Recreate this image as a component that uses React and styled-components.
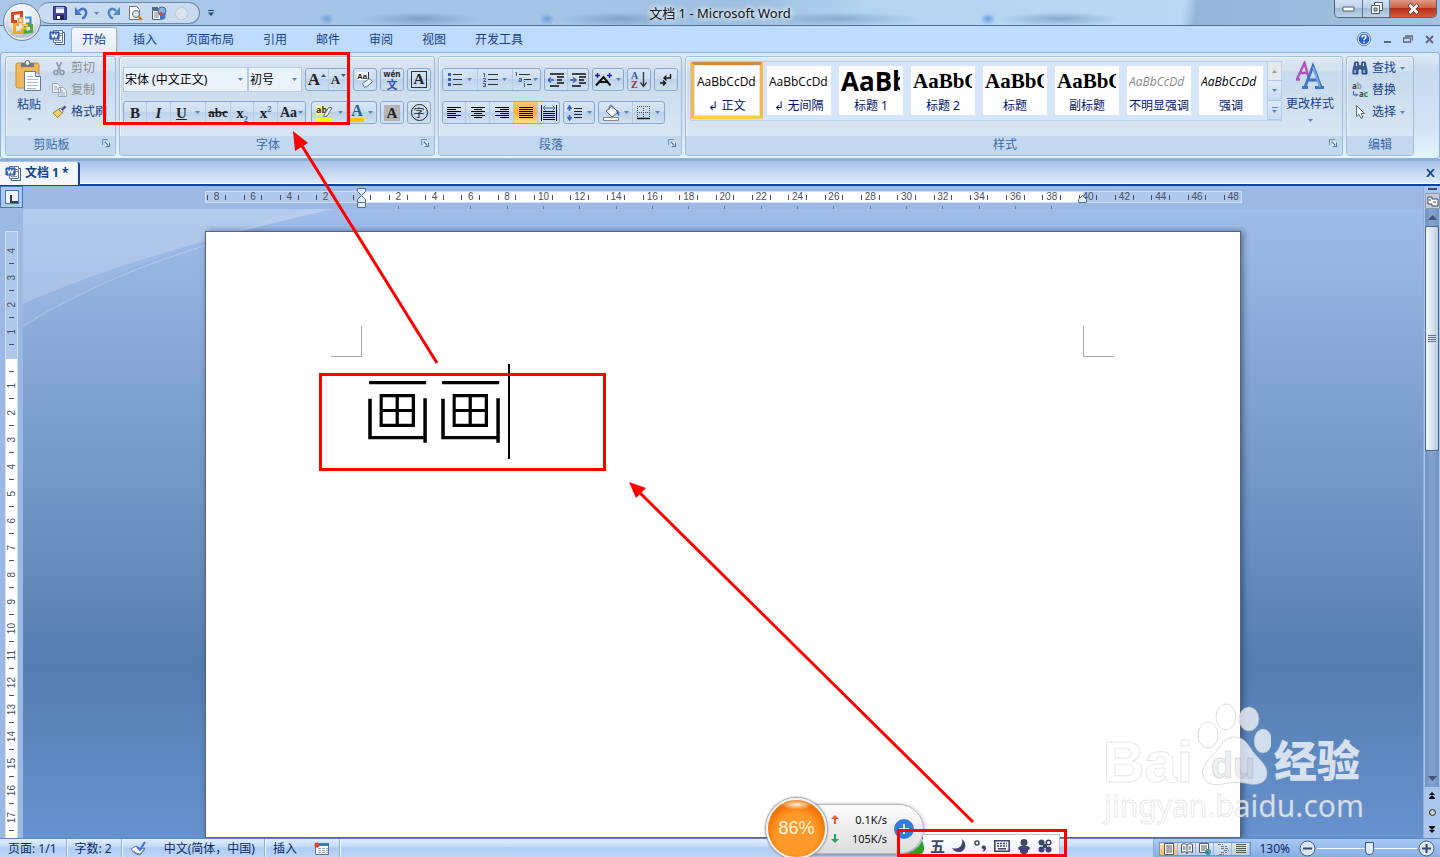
import React from 'react'
import styled, { createGlobalStyle } from 'styled-components'

const GlobalStyle = createGlobalStyle`
   *{
      box-sizing: border-box;
   }
   body{
      margin: 0;
      overflow: hidden;
      font-family: "Noto Sans", "Noto Sans CJK SC", sans-serif;
      font-size: 12px;
      line-height: 16px;
      color: #15428b;
   }
   button, select{
      font: inherit;
      color: inherit;
      padding: 0;
      margin: 0;
      border: 0;
      background: none;
   }
   a{
      color: inherit;
      text-decoration: none;
   }
   svg{
      display: block;
      flex: none;
   }
   p, h1, h2{
      margin: 0;
      font-size: inherit;
      font-weight: normal;
   }
`

/* ---------- icons ---------- */

const Drop = ({ color = '#5b83b8' }) => (
   <svg width="5" height="3" viewBox="0 0 5 3"><path d="M0 0h5L2.5 3z" fill={color} /></svg>
)

const Launcher = () => (
   <svg width="8" height="8" viewBox="0 0 8 8" fill="none">
      <path d="M.5 6V.5H6" stroke="#6d8fba" />
      <path d="M3 3h5v5H3z" fill="#fff" />
      <path d="M3 3l3 3M7.500 3.500v4h-4" stroke="#4d719f" strokeWidth="1.300" />
   </svg>
)

const WordIcon = () => (
   <svg width="17" height="17" viewBox="0 0 17 17">
      <path d="M6.500 3.500h9v12h-9z" fill="#fff" stroke="#44618f" />
      <path d="M4.500 1.500h9v12h-9z" fill="#f4f8ff" stroke="#5d7bab" />
      <path d="M10 4.500h3M10 6.500h3M6 11.500h6" stroke="#7d97c2" />
      <path d="M1 3h9v7H1z" fill="#3f68b8" stroke="#2b4f9b" />
      <path d="M2.500 4.500L4 8.500l1.500-3.500L7 8.500l1.500-4" fill="none" stroke="#fff" strokeWidth="1.200" />
   </svg>
)

const OfficeLogo = () => (
   <svg width="44" height="44" viewBox="0 0 44 44">
      <defs>
         <radialGradient id="orb" cx=".5" cy=".3" r=".75">
            <stop offset="0" stopColor="#fff" />
            <stop offset=".55" stopColor="#dfe6ef" />
            <stop offset=".8" stopColor="#b4c2d6" />
            <stop offset="1" stopColor="#f4f8fc" />
         </radialGradient>
      </defs>
      <circle cx="22" cy="22" r="18.500" fill="url(#orb)" stroke="#7285a0" />
      <circle cx="22" cy="22" r="17" fill="none" stroke="#fff" strokeOpacity=".8" />
      <g fill="none" strokeWidth="3">
         <path d="M17 21.500h-4.500v-8l9-1v5" stroke="#d9481c" />
         <path d="M25 17.500h5.500v6H26" stroke="#3f8fd0" strokeWidth="2.200" />
         <path d="M19 24.500h-4.500v8H22v-4" stroke="#f0a91e" />
         <path d="M25 26v6.500l6.500-1V25.500h-4" stroke="#5aa53a" />
         <path d="M18.500 18.500h4v4h-4z" stroke="#f39a2c" strokeWidth="1.600" />
         <path d="M22.500 24.500h4v4h-4z" stroke="#f4c52e" strokeWidth="1.600" />
      </g>
   </svg>
)

const Save = () => (
   <svg width="14" height="14" viewBox="0 0 14 14">
      <path d="M.5.500h12l1 1v12H.5z" fill="#4645a8" stroke="#2c2c80" />
      <path d="M3 1h8v6H3z" fill="#f4f6ff" /><path d="M3 1h8v2H3z" fill="#9fb3e6" />
      <path d="M3 9h8v5H3z" fill="#23235f" /><path d="M4 10h3v3H4z" fill="#fff" />
   </svg>
)
const Undo = ({ flip }) => (
   <svg width="13" height="14" viewBox="0 0 13 14">
      <g transform={flip ? 'translate(13 0) scale(-1 1)' : undefined}>
         <path d="M4 5c3-4 8-2 7 3-.4 2-1.500 3.500-4 4.500" fill="none" stroke={flip ? '#4d86c9' : '#4472c4'} strokeWidth="2.400" />
         <path d="M0 1v8h7z" fill={flip ? '#4d86c9' : '#4472c4'} />
      </g>
   </svg>
)
const Preview = () => (
   <svg width="15" height="15" viewBox="0 0 15 15">
      <path d="M1.500.500h7l3 3v10h-10z" fill="#fff" stroke="#6f7785" />
      <circle cx="8" cy="8" r="3.500" fill="#d5e6f6" stroke="#626b78" />
      <path d="M10.500 10.500l3.500 3.500" stroke="#c9842a" strokeWidth="2.400" />
   </svg>
)
const Research = () => (
   <svg width="16" height="15" viewBox="0 0 16 15">
      <path d="M1.500 4.500h8v9h-8z" fill="#fff" stroke="#53617a" />
      <path d="M3 7h5M3 9h5M3 11h5" stroke="#6f7f99" />
      <path d="M1 1h6v3H1z" fill="#5c6778" />
      <circle cx="11" cy="5" r="4" fill="#86b3e4" stroke="#41699e" />
      <path d="M9 9l6-3-1 7-4 1z" fill="#3c7ad0" /><circle cx="10" cy="8" r="2" fill="#d94d3c" />
   </svg>
)

const Paste = () => (
   <svg width="28" height="32" viewBox="0 0 28 32">
      <rect x="1" y="3" width="23" height="25" rx="2" fill="#efb65b" stroke="#c98f38" />
      <path d="M6 3h13v4H6z" fill="#737984" /><circle cx="12.500" cy="3" r="2.500" fill="#e7e9ec" stroke="#646a75" />
      <path d="M9.500 11.500h11l5 5v14h-16z" fill="#fbfdff" stroke="#63779a" />
      <path d="M20.500 11.500v5h5" fill="#d5e1f2" stroke="#63779a" />
      <path d="M12 16.500h6M12 19.500h11M12 22.500h11M12 25.500h11M12 28.500h9" stroke="#a9b9d3" />
   </svg>
)
const Cut = () => (
   <svg width="15" height="15" viewBox="0 0 15 15" fill="none" stroke="#8f9bad">
      <path d="M4.500 1l4 9M9.500 1l-4 9" strokeWidth="1.700" />
      <circle cx="4" cy="11.500" r="2" strokeWidth="1.700" /><circle cx="10" cy="11.500" r="2" strokeWidth="1.700" />
   </svg>
)
const Copy = () => (
   <svg width="15" height="14" viewBox="0 0 15 14" fill="#eef2f8" stroke="#97a5bb">
      <path d="M.5.500h5l3 3v6h-8zM6.500 4.500h5l3 3v6h-8z" /><path d="M2 4h3M2 6h4M8 8h3M8 10h5M8 12h5" />
   </svg>
)
const Brush = () => (
   <svg width="15" height="14" viewBox="0 0 16 14">
      <path d="M1 8l6-4 4 4-5 5z" fill="#f1d268" stroke="#9b7a24" />
      <path d="M7 4l2-1 3 3-1 2z" fill="#f6f6f6" stroke="#6e6e6e" />
      <path d="M10.500 4.500L14.500 1" stroke="#5a4a8a" strokeWidth="2.600" />
   </svg>
)

const SizeMark = ({ down }) => (
   <svg width="5" height="12" viewBox="0 0 5 12"><path d={down ? 'M0 0h5L2.500 3z' : 'M0 3h5L2.500 0z'} fill="#2f5597" /></svg>
)
const Eraser = () => (
   <svg width="18" height="18" viewBox="0 0 18 18">
      <path d="M1 1h12v8H1z" fill="#fff" />
      <text x="1" y="8" fontSize="8" fontWeight="bold" fontFamily="Liberation Sans" fill="#222">Aa</text>
      <path d="M12.500 1v7" stroke="#333" />
      <path d="M6.500 12.500l7-5 3 3-6 5.500H8z" fill="#eef1f8" stroke="#6a7896" />
   </svg>
)
const Highlighter = () => (
   <svg width="18" height="18" viewBox="0 0 18 18">
      <path d="M0 2h10v9H0z" fill="#fff68a" />
      <text x="0" y="9" fontSize="9" fontFamily="Noto Sans" fontWeight="bold" fill="#333">ab</text>
      <path d="M8 11l5-8 3 1-5 8-3 1z" fill="#e9eef7" stroke="#6a7690" />
      <path d="M0 14h16v4H0z" fill="#ff0" />
   </svg>
)

const Bullets = () => (
   <svg width="15" height="15" viewBox="0 0 15 15">
      <path d="M5 2.500h9M5 7.500h9M5 12.500h9" stroke="#333" />
      <path d="M0 1h3v3H0zM0 6h3v3H0zM0 11h3v3H0z" fill="#3f5fae" />
   </svg>
)
const Numbering = () => (
   <svg width="15" height="15" viewBox="0 0 15 15">
      <path d="M5 2.500h10M5 7.500h10M5 12.500h10" stroke="#333" />
      <path d="M0 1.500h1.500V5M0 6.500h2.500v1.200L.5 9.500H3M0 11.500h2.500v3H0M1 13h1" fill="none" stroke="#3f5fae" />
   </svg>
)
const MultiLevel = () => (
   <svg width="17" height="15" viewBox="0 0 17 15">
      <path d="M4 2.500h11M9 7.500h7M12 12.500h5" stroke="#333" />
      <path d="M.5.500h1V4M4 6.500h2.500V9.500H4V8h2M9.500 9v1M9.500 11v4" fill="none" stroke="#3f5fae" />
   </svg>
)
const Indent = ({ right }) => (
   <svg width="16" height="15" viewBox="0 0 16 15">
      <path d="M2 2h14M9 5h7M9 8h5M9 11h7M2 14h9" stroke="#111" strokeWidth="1.500" />
      <path d={right ? 'M0 8h5M3 5.500l3 2.500-3 2.500' : 'M6 8H1M3 5.500L0 8l3 2.500'} fill="none" stroke="#3f5fae" strokeWidth="1.500" />
   </svg>
)
const ChineseLayout = () => (
   <svg width="17" height="14" viewBox="0 0 17 14" fill="none">
      <path d="M1 12.500L8.500 4l7 8.500M5 9h7" stroke="#111" strokeWidth="2" />
      <path d="M0 2.500h5M2.500 0v5M12 2.500h5M14.500 0v5" stroke="#1b1b9c" strokeWidth="1.400" />
   </svg>
)
const Sort = () => (
   <svg width="16" height="18" viewBox="0 0 16 18">
      <text x="0" y="8" fontSize="10" fontWeight="bold" fontFamily="Liberation Serif" fill="#3457a6">A</text>
      <text x="0" y="17" fontSize="10" fontWeight="bold" fontFamily="Liberation Serif" fill="#a22b32">Z</text>
      <path d="M12.500 1v14M9.500 11.500l3 4 3-4" fill="none" stroke="#333" strokeWidth="1.300" />
   </svg>
)
const Marks = () => (
   <svg width="12" height="14" viewBox="0 0 12 14" fill="none" stroke="#111" strokeWidth="1.400">
      <path d="M10.500 1v4H4M6.500 2.500L4 5l2.500 2.500M0 10h5M3 7.500L5.500 10 3 12.500" />
   </svg>
)
const alignLines = {
   left: 'M0 .5h14M0 2.500h9M0 4.500h14M0 6.500h9M0 8.500h14M0 10.500h9',
   center: 'M0 .5h14M3 2.500h8M0 4.500h14M3 6.500h8M0 8.500h14M3 10.500h8',
   right: 'M0 .5h14M5 2.500h9M0 4.500h14M5 6.500h9M0 8.500h14M5 10.500h9',
   justify: 'M0 .5h14M0 2.500h14M0 4.500h14M0 6.500h14M0 8.500h14M0 10.500h14',
}
const Align = ({ kind }) => (
   <svg width="14" height="11" viewBox="0 0 14 11"><path d={alignLines[kind]} stroke="#000" /></svg>
)
const Distribute = () => (
   <svg width="16" height="16" viewBox="0 0 16 16" fill="none">
      <path d="M.5 0v16M15.500 0v16M2 6.500h12M2 8.500h12M2 10.500h12M2 12.500h12M2 14.500h12" stroke="#111" />
      <path d="M2 3h12M4.500.500L2 3l2.500 2.500M11.500.500L14 3l-2.500 2.500" stroke="#3d66b8" />
   </svg>
)
const Spacing = () => (
   <svg width="16" height="16" viewBox="0 0 16 16" fill="none">
      <path d="M7 3.500h8M7 6.500h8M7 9.500h8M7 12.500h8" stroke="#222" />
      <path d="M2.500 1v5M2.500 10v5M.5 4l2-3 2 3M.5 12l2 3 2-3" stroke="#3563b5" strokeWidth="1.500" />
   </svg>
)
const Bucket = () => (
   <svg width="17" height="17" viewBox="0 0 17 17">
      <path d="M3 7l6-5 6 6-6 5z" fill="#f7f9fd" stroke="#56667f" />
      <path d="M6 6c0-7 4-6 4-1" fill="none" stroke="#56667f" />
      <path d="M14 6c2 1 3 3 2 6-2-1-2-4-3-5z" fill="#3a68b8" />
      <path d="M.5 13.500h15v3H.5z" fill="#fff" stroke="#8b8b8b" />
   </svg>
)
const Borders = () => (
   <svg width="14" height="14" viewBox="0 0 14 14">
      <path d="M.5 0v13M6.500 0v13M12.500 0v13M0 .5h13M0 6.500h13" stroke="#555" strokeDasharray="1 1" />
      <path d="M0 12.500h13" stroke="#111" strokeWidth="1.500" />
   </svg>
)
const Binoculars = () => (
   <svg width="16" height="14" viewBox="0 0 16 14">
      <path d="M3 1h3l1 4h2l1-4h3l2 8v4h-5V8H6v5H1V9z" fill="#3e5f96" stroke="#29477b" />
      <path d="M3 9v3M12 9v3M4.500 2v3M11.500 2v3" stroke="#dce8f8" />
   </svg>
)
const Replace = () => (
   <svg width="16" height="16" viewBox="0 0 16 16">
      <text x="0" y="7" fontSize="8" fontWeight="bold" fontFamily="Noto Sans" fill="#444">a<tspan fill="#999">b</tspan></text>
      <path d="M1.500 9v4h4M4 11.500L5.500 13 4 14.500" fill="none" stroke="#3563b5" />
      <text x="7" y="15" fontSize="8" fontWeight="bold" fontFamily="Noto Sans" fill="#444">a<tspan fill="#158a2c">c</tspan></text>
   </svg>
)
const Cursor = () => (
   <svg width="16" height="14" viewBox="0 0 16 14">
      <path d="M4.500.500v11l2.500-2 2 4 2-1-2-4h3.500z" fill="#fff" stroke="#5e6b80" />
   </svg>
)
const ChangeStyles = () => (
   <svg width="30" height="28" viewBox="0 0 30 28">
      <path d="M1 18.500h4M2 18L9.500 2l4.500 16M5 12h8" fill="none" stroke="#b251bd" strokeWidth="2.400" />
      <path d="M7 26.500h6M10 26L18 5l8 21M13 19h10M20 26.500h9" fill="none" stroke="#3f74c5" strokeWidth="2.800" />
      <path d="M18 6l7 20" stroke="#79a9ea" strokeWidth="2" />
   </svg>
)
const Help = () => (
   <svg width="14" height="14" viewBox="0 0 14 14">
      <circle cx="7" cy="7" r="6" fill="#2960cf" stroke="#fff" strokeWidth="1.200" />
      <circle cx="7" cy="7" r="6.600" fill="none" stroke="#3a62ad" strokeWidth=".8" />
      <path d="M5 5.500c0-3 4-2.500 4-.3 0 1.300-2 1.500-2 3M7 9.500v1.500" fill="none" stroke="#fff" strokeWidth="1.500" />
   </svg>
)
const Proof = () => (
   <svg width="17" height="15" viewBox="0 0 17 15">
      <path d="M1 8l5-3 4 3 5-1-5 6-4-1z" fill="#fff" stroke="#697a97" /><path d="M2 10l4 3 4 1 5-6" fill="none" stroke="#697a97" />
      <path d="M7 6l3 3 5-8" fill="none" stroke="#3d6fd2" strokeWidth="2" />
   </svg>
)
const Macro = () => (
   <svg width="16" height="13" viewBox="0 0 16 13">
      <path d="M1.500 1.500h13v11h-13z" fill="#f8fafc" stroke="#646e85" /><path d="M2 1h13v3H2z" fill="#3e72cf" />
      <path d="M4 6.500h10M4 8.500h10M4 10.500h10" stroke="#9ba5b8" strokeDasharray="3 1" />
      <circle cx="3" cy="3" r="2.600" fill="#d9472f" />
   </svg>
)
const viewIcons = {
   print: <path d="M1.500.500h9v11h-9zM3 3h6M3 5h6M3 7h6M3 9h6" fill="#fff" stroke="#555" />,
   read: <path d="M.5 1.500c2-1 4-1 5.500.5 1.500-1.500 3.500-1.500 5.500-.5v8c-2-1-4-1-5.500.5-1.500-1.500-3.500-1.500-5.500-.5zM6 2v9M2 4h2.500M2 6h2.500M7.500 4H10M7.500 6H10" fill="#fff" stroke="#555" />,
   web: <g><path d="M.5.500h9v9h-9zM2 3h6M2 5h6M2 7h4" fill="#fff" stroke="#555" /><circle cx="9" cy="9" r="3" fill="#2f83b7" /><path d="M8 7l3 1-1 3" stroke="#64b944" fill="none" /></g>,
   outline: <path d="M1 1.500h5M4 3.500h6M4 5.500h7M7 7.500h5M4 9.500h6M2 11.500h5" stroke="#777" strokeDasharray="3 1" />,
   draft: <path d="M1 1.500h10M1 3.500h10M1 5.500h10M1 7.500h10M1 9.500h10" stroke="#555" />,
}

/* ---------- window frame ---------- */

const Window = styled.div`
   position: relative;
   display: flex;
   flex-direction: column;
   height: 100vh;
   overflow: hidden;
   background: #bfdbff;
`
const TitleBar = styled.header`
   display: grid;
   grid-template-columns: 1fr auto 1fr;
   height: 26px;
   border-bottom: 1px solid #55708f;
   background:
      radial-gradient(ellipse 8px 6px at 327px 19px, rgba(70, 130, 215, .55), transparent),
      radial-gradient(ellipse 8px 6px at 547px 19px, rgba(70, 130, 215, .55), transparent),
      radial-gradient(ellipse 8px 6px at 988px 19px, rgba(70, 130, 215, .65), transparent),
      radial-gradient(ellipse 60px 7px at 420px 19px, rgba(70, 105, 145, .4), transparent),
      radial-gradient(ellipse 60px 7px at 620px 19px, rgba(70, 105, 145, .35), transparent),
      radial-gradient(ellipse 80px 7px at 840px 19px, rgba(70, 105, 145, .35), transparent),
      radial-gradient(ellipse 60px 7px at 1060px 19px, rgba(70, 105, 145, .4), transparent),
      linear-gradient(100deg, #a9c7e8 0, #a5c5e6 40%, #9dbfdf 52%, #b3d3f0 60%, #b9d8f3 82%, #93b6d8 83%, #a4c2df 100%);
`
const OfficeButton = styled.button`
   position: absolute;
   left: 0;
   top: 0;
   z-index: 2;
`
const QuickAccess = styled.div`
   display: flex;
   align-items: center;
   justify-self: start;
   margin: 2px 0 2px 38px;
   gap: 8px;
`
const Pill = styled.div`
   display: flex;
   align-items: center;
   height: 22px;
   padding: 0 11px 0 15px;
   gap: 8px;
   border: 1px solid #7189a8;
   border-left: 0;
   border-radius: 12px;
   background: rgba(220, 232, 246, .6);

   button{
      display: flex;
      align-items: center;
      gap: 6px;
   }
`
const Ball = styled.span`
   width: 13px;
   height: 13px;
   border-radius: 50%;
   border: 1px solid #c0ccda;
   background: #dce5ee;
`
const Title = styled.h1`
   align-self: center;
   font-size: 13px;
   color: #111;
   text-shadow: 0 0 6px #fff, 0 0 6px #fff;
`
const WindowButtons = styled.div`
   display: flex;
   justify-self: end;
   height: 18px;
   margin-right: 3px;
   border: 1px solid #50657e;
   border-top: 0;
   border-radius: 0 0 5px 5px;
   overflow: hidden;
`
const WindowButton = styled.button`
   display: flex;
   align-items: center;
   justify-content: center;
   width: ${p => (p.$close ? 47 : 27)}px;
   border-left: ${p => (p.$first ? 0 : '1px solid #5f7690')};
   background: ${p => (p.$close
      ? 'linear-gradient(#e09a84, #cf634b 45%, #b7301a 50%, #d1593c)'
      : 'linear-gradient(#d3e2f2, #bdd2e8 45%, #a1bbd6 50%, #bdd3e9)')};
`

/* ---------- tabs ---------- */

const TabRow = styled.nav`
   display: flex;
   align-items: flex-end;
   height: 26px;
   padding: 0 6px 0 49px;
`
const WordMenu = styled.button`
   padding: 0 0 6px;
   margin-right: 5px;
`
const Tab = styled.a`
   height: 25px;
   padding: 5px 14px 0;
   margin-right: 1px;
   ${p => p.$active && `
      padding: 4px 10px 0;
      margin-right: 2px;
      border: 1px solid #8fb4e4;
      border-bottom: 0;
      border-radius: 3px 3px 0 0;
      background: linear-gradient(#f4f8fd, #e3edf9);
      box-shadow: 1px 0 2px #e8c77a;
   `}
`
const TabTools = styled.div`
   display: flex;
   align-items: center;
   gap: 12px;
   margin-left: auto;
   height: 26px;

   button{
      display: flex;
      justify-content: center;
      min-width: 8px;
   }
`

/* ---------- ribbon ---------- */

const Ribbon = styled.section`
   display: flex;
   gap: 3px;
   height: 107px;
   padding: 3px 25px 3px 4px;
   border: 1px solid #8db2e3;
   border-bottom-color: #8fb3d5;
   border-radius: 4px;
   background: linear-gradient(#dfeaf6, #c8daee 18%, #d4e4f5 75%, #e4f5ff);
`
const GroupBox = styled.section`
   display: flex;
   flex-direction: column;
   flex: ${p => (p.$grow ? '1 1 auto' : 'none')};
   min-width: ${p => p.$w}px;
   height: 100px;
   border: 1px solid #a2bedd;
   border-radius: 3px;
   box-shadow: inset 1px 1px 0 rgba(255, 255, 255, .6);
   background: linear-gradient(#dde8f3, #d3e0ef 14px, #c7d9ec 15px, #d9e6f3 80px);
`
const GroupBody = styled.div`
   flex: 1;
   display: flex;
   flex-direction: ${p => (p.$rows ? 'column' : 'row')};
   padding: ${p => p.$pad || '4px 3px 0'};
   gap: ${p => p.$gap || 0}px;
`
const GroupLabel = styled.footer`
   display: grid;
   grid-template-columns: 1fr auto 1fr;
   height: 19px;
   padding: 1px 5px 0;
   color: #3e6aaa;
   background: #c1d8f0;

   h2{
      padding-right: ${p => (p.$shift ? 18 : 0)}px;
   }
   button{
      justify-self: end;
      margin-top: 2px;
      align-self: start;
   }
`
const Group = ({ label, w, grow, rows, pad, gap, launcher = true, children }) => (
   <GroupBox $w={w} $grow={grow} aria-label={label}>
      <GroupBody $rows={rows} $pad={pad} $gap={gap}>{children}</GroupBody>
      <GroupLabel $shift={launcher}>
         <span />
         <h2>{label}</h2>
         {launcher ? <button aria-label={`${label}选项`}><Launcher /></button> : <span />}
      </GroupLabel>
   </GroupBox>
)

const BigButton = styled.button`
   display: flex;
   flex-direction: column;
   align-items: center;
   gap: ${p => p.$gap || 5}px;
   width: ${p => p.$w}px;
   white-space: nowrap;
`
const SmallList = styled.div`
   display: flex;
   flex-direction: column;
   gap: 6px;
`
const SmallButton = styled.button`
   display: flex;
   align-items: center;
   gap: 4px;
   height: 16px;
   white-space: nowrap;
   color: ${p => (p.$off ? '#8d8d8d' : '#15428b')};
`
const Row = styled.div`
   display: flex;
   align-items: center;
   gap: 3px;
`
const Combo = styled.label`
   display: flex;
   align-items: center;
   width: ${p => p.$w}px;
   height: 25px;
   padding: 0 4px 0 1px;
   border: 1px solid #b3cbe8;
   background: #eaf2fb;
   margin-right: ${p => (p.$last ? 0 : -3)}px;

   select{
      flex: 1;
      min-width: 0;
      appearance: none;
      color: #000;
      outline: 0;
   }
`
const Cluster = styled.div`
   display: flex;
   height: 23px;
   border: 1px solid #8ba9cf;
   border-radius: 3px;
   background: linear-gradient(#d9e6f4, #cddef0 45%, #bdd2ea 50%, #cfe0f3);
   margin-right: ${p => (p.$space || 0)}px;
`
const Tool = styled.button`
   display: flex;
   align-items: center;
   justify-content: center;
   gap: ${p => (p.$tight ? 1 : 4)}px;
   width: ${p => p.$w}px;
   color: #222;
   background: ${p => (p.$on ? 'linear-gradient(#fbc580, #fdab45 50%, #ffe083)' : 'none')};

   & + &{
      border-left: 1px solid #b5cbe5;
   }
`
const Glyph = styled.span`
   font-family: "Liberation Serif", "Noto Sans CJK SC", serif;
   font-weight: bold;
   font-size: ${p => p.$size || 15}px;
   font-style: ${p => (p.$italic ? 'italic' : 'normal')};
   text-decoration: ${p => p.$line || 'none'};

   sub, sup{
      font-size: 8px;
      line-height: 0;
      color: #3563b5;
   }
`
const FontColor = styled(Glyph)`
   height: 18px;
   line-height: 14px;
   color: #2f5597;
   border-bottom: 4px solid #ffc000;
   padding: 0 1px;
`
const Shade = styled(Glyph)`
   width: 16px;
   line-height: ${p => (p.$frame ? 15 : 16)}px;
   background: ${p => (p.$frame ? 'none' : '#b4b4b4')};
   border: ${p => (p.$frame ? '1px solid #333' : 0)};
`
const Phonetic = styled.span`
   display: flex;
   flex-direction: column;
   align-items: center;
   font: bold 8px/8px "Noto Sans", sans-serif;

   b{
      font: bold 11px/12px "Noto Sans CJK SC", sans-serif;
      color: #3a4fc4;
   }
`
const Circled = styled.span`
   display: flex;
   align-items: center;
   justify-content: center;
   width: 17px;
   height: 17px;
   border: 1px solid #222;
   border-radius: 50%;
   font-size: 11px;
`

/* ---------- styles gallery ---------- */

const Gallery = styled.div`
   display: flex;
   height: 60px;
   border: 1px solid #b9d0ed;
   background: #d6e6f8;
`
const StyleCard = styled.button`
   width: 72px;
   height: 57px;
   padding: ${p => (p.$on ? 1 : 4)}px;
   border-radius: 2px;
   border: ${p => (p.$on ? '3px solid #f5b84d' : 0)};
   border-top-color: #c98f4e;
   border-bottom-color: #fccf45;

   span{
      display: flex;
      flex-direction: column;
      height: 49px;
      background: #fff;
   }
`
const Sample = styled.b`
   height: 32px;
   line-height: 31px;
   margin: 0 3px 0 2px;
   overflow: hidden;
   white-space: nowrap;
   text-align: left;
   color: ${p => p.$color || '#000'};
   font-family: ${p => (p.$serif ? '"Liberation Serif", serif' : '"Open Sans", sans-serif')};
   font-size: ${p => p.$size || 12}px;
   font-weight: ${p => (p.$bold ? 'bold' : 'normal')};
   font-style: ${p => (p.$italic ? 'italic' : 'normal')};
`
const StyleName = styled.i`
   font-style: normal;
   line-height: 16px;
   text-align: center;
   white-space: nowrap;
   color: #00156e;
`
const GalleryScroll = styled.div`
   display: flex;
   flex-direction: column;
   width: 14px;
   border-left: 1px solid #b9d0ed;

   button{
      flex: 1;
      display: flex;
      flex-direction: column;
      gap: 2px;
      align-items: center;
      justify-content: center;
      background: linear-gradient(#dfeafa, #c6dbf4);
      border-bottom: 1px solid #b0c9e8;
   }
   button:first-child{
      background: #e6e8ea;
   }
`

/* ---------- document area ---------- */

const DocTabs = styled.div`
   display: flex;
   justify-content: space-between;
   align-items: center;
   height: 27px;
   padding: 1px 5px 0 0;
   border-top: 2px solid #8cadd8;
   border-bottom: 2px solid #0f44a4;
   background: linear-gradient(#a6c3ea, #dfebfb);
   box-shadow: inset 0 -1px #fff;
`
const DocTab = styled.a`
   display: flex;
   align-items: center;
   gap: 3px;
   height: 23px;
   padding: 0 9px 0 5px;
   border-right: 2px solid #0f44a4;
   border-radius: 0 3px 0 0;
   background: #f3f6fb;
   font-weight: bold;
`
const Body = styled.main`
   flex: 1;
   min-height: 0;
   display: grid;
   grid-template-columns: 23px 1fr 17px;
`
const LeftRail = styled.aside`
   display: flex;
   flex-direction: column;
   align-items: center;
   min-height: 0;
   background: #9bb9e2;
`
const TabStop = styled.button`
   width: 23px;
   height: 22px;
   padding: 3px 4px;
   border: 1px solid #4478cf;
   background: #aec9ee;

   span{
      display: block;
      width: 14px;
      height: 14px;
      padding: 4px;
      border: 1px solid #4478cf;
      background: #f1f6fd;
   }
   span::after{
      content: '';
      display: block;
      width: 6px;
      height: 6px;
      border-left: 2px solid #253c66;
      border-bottom: 2px solid #253c66;
   }
`
const VRuler = styled.div`
   flex: 1;
   min-height: 0;
   overflow: hidden;
   width: 13px;
   margin-top: 23px;
   padding-top: 5px;
   border: 1px solid #cfe0fa;
   border-bottom: 0;
   background: linear-gradient(#b0c8ec 127px, #fff 127px);
   color: #4a4f63;
   font: 10px/11px "Liberation Sans", sans-serif;

   div{
      display: flex;
      align-items: center;
      justify-content: center;
      height: 27px;
      background: linear-gradient(#4a4f63, #4a4f63) 50% 26px / 5px 1px no-repeat;
   }
   span{
      writing-mode: vertical-rl;
      rotate: 180deg;
   }
`
const Center = styled.div`
   display: flex;
   flex-direction: column;
   min-width: 0;
   min-height: 0;
`
const RulerBar = styled.div`
   height: 23px;
   padding-top: 5px;
   background: #9bb9e2;
`
const HRuler = styled.div`
   position: relative;
   width: 100%;
   max-width: 1037px;
   height: 12px;
   margin: 0 auto;
   border: 1px solid #cfe0fa;
   background: linear-gradient(90deg, #b0c8ec 156px, #fff 156px, #fff 877px, #b0c8ec 877px);
`
const Scale = styled.div`
   display: grid;
   grid-template-columns: repeat(29, 1fr);
   height: 17px;
   margin: 0 -11px 0 -7px;
   color: #4a4f63;
   font: 10px/10px "Liberation Sans", sans-serif;
   text-align: center;
   clip-path: inset(0 11px 0 7px);
`
const Mark = styled.span`
   background:
      linear-gradient(#4a4f63, #4a4f63) 25% 3px / 1px 5px no-repeat,
      linear-gradient(#4a4f63, #4a4f63) 75% 3px / 1px 5px no-repeat,
      linear-gradient(#7a7a7a, #7a7a7a) 50% 14px / ${p => (p.$stop ? 1 : 0)}px 3px no-repeat;
`
const IndentMark = styled.svg`
   position: absolute;
   top: -4px;
   left: ${p => p.$x}px;
`
const Desk = styled.div`
   position: relative;
   flex: 1;
   min-height: 0;
   overflow: hidden;
   padding-top: 22px;
   background: linear-gradient(#9fbde8, #8fafdd 15%, #567db0 73%, #6692ce);
`
const Swoosh = styled.svg`
   position: absolute;
   left: 0;
   top: 0;
`
const Paper = styled.article`
   position: relative;
   width: 100%;
   max-width: 1036px;
   min-height: 100%;
   margin: 0 auto;
   padding: 94px 126px;
   border: 1px solid #5c6470;
   background: #fff;
   box-shadow: 2px 0 6px rgba(20, 40, 80, .55);
`
const Corners = styled.div`
   display: flex;
   justify-content: space-between;
   margin: 0 0 7px -1px;

   i{
      width: 31px;
      height: 31px;
      border: 0 solid #aaa;
      border-width: 0 1px 1px 0;
   }
   i + i{
      border-width: 0 0 1px 1px;
   }
`
const Text = styled.p`
   display: flex;
   padding-left: 29px;
   color: #000;
   font: 300 73px/83px "Noto Sans CJK SC", sans-serif;
   outline: 0;

   &::after{
      content: '';
      width: 2px;
      height: 95px;
      margin-left: 1px;
      background: #000;
   }
`
const ScrollRail = styled.aside`
   display: flex;
   flex-direction: column;
   align-items: center;
   padding: 2px 1px 0;
   background: #a9c6ef;
   border-left: 1px solid #8fafd9;

   button{
      display: flex;
      align-items: center;
      justify-content: center;
      width: 100%;
      flex: none;
      height: 17px;
   }
`
const Split = styled.i`
   width: 9px;
   height: 2px;
   margin-bottom: 2px;
   background: #3c4c66;
`
const Track = styled.div`
   flex: 1;
   width: 100%;
   display: flex;
   flex-direction: column;
   background: linear-gradient(90deg, #7391be, #86a4cf 50%, #7391be);
`
const Thumb = styled.div`
   display: flex;
   align-items: center;
   justify-content: center;
   height: 39%;
   border: 1px solid #4b6690;
   border-radius: 2px;
   background: linear-gradient(90deg, #f4f7fb, #dbe4f0 50%, #bccce2);
`
const Spacer = styled.i`
   flex: 1;
`

/* ---------- status bar ---------- */

const StatusBar = styled.footer`
   display: flex;
   align-items: stretch;
   height: 19px;
   border-top: 1px solid #5c86bd;
   background: linear-gradient(#e0edfd, #c7dcf8 40%, #aecbf2 50%, #bdd6f8);
   color: #0c2a66;
   line-height: 19px;
`
const StatusItem = styled.button`
   display: flex;
   align-items: center;
   padding: 0 9px 0 8px;
   border-right: 1px solid #8fb0dd;
   box-shadow: 1px 0 #eef5ff;
   white-space: nowrap;
   color: #0c2a66;
`
const Plain = styled(StatusItem)`
   border-right: 0;
   box-shadow: none;
`
const Views = styled.div`
   display: flex;
   margin: 1px 8px 0 5px;
   border: 1px solid #7097cd;
`
const ViewButton = styled.button`
   display: flex;
   align-items: center;
   justify-content: center;
   width: 18px;
   border-right: 1px solid #9bb9e2;
   background: ${p => (p.$on ? 'linear-gradient(#fde3ae, #fbb75a)' : 'linear-gradient(#dfeafa, #b6cff0)')};
`
const RightStatus = styled.div`
   display: flex;
   align-items: center;
   margin-left: auto;
   border-left: 1px solid #8fb0dd;
   padding-right: 5px;
   background: linear-gradient(#a9c9f5, #86aee3);
`
const Percent = styled.button`
   margin-right: 9px;
`
const ZoomSlider = styled.input`
   appearance: none;
   width: 100px;
   height: 16px;
   margin: 0 1px;
   background: linear-gradient(#f2f7ff, #f2f7ff) center / 100% 1px no-repeat;

   &::-webkit-slider-thumb{
      appearance: none;
      width: 9px;
      height: 13px;
      border: 1px solid #3c598c;
      border-radius: 1px 1px 5px 5px;
      background: #dfebfb;
   }
`
const RoundButton = ({ plus }) => (
   <button aria-label={plus ? '放大' : '缩小'}>
      <svg width="17" height="17" viewBox="0 0 17 17">
         <circle cx="8.500" cy="8.500" r="7.500" fill="#dbe7f6" stroke="#3f5b8a" />
         <path d={plus ? 'M4 8.500h9M8.500 4v9' : 'M4 8.500h9'} stroke="#35486b" strokeWidth="2" />
      </svg>
   </button>
)

/* ---------- things floating over the window ---------- */

const RedBox = styled.div`
   position: absolute;
   left: ${p => p.$x}px;
   top: ${p => p.$y}px;
   width: ${p => p.$w}px;
   height: ${p => p.$h}px;
   border: 3px solid #f00;
   pointer-events: none;
   z-index: 5;
`
const Arrows = styled.svg`
   position: absolute;
   left: 0;
   top: 0;
   pointer-events: none;
   z-index: 5;
`
const SpeedWidget = styled.div`
   position: absolute;
   left: 766px;
   bottom: -2px;
   display: flex;
   align-items: center;
   z-index: 3;
`
const SpeedBall = styled.div`
   width: 61px;
   height: 61px;
   border: 2px solid #f3f3f3;
   border-radius: 50%;
   background: radial-gradient(ellipse 16px 5px at 50% 8%, #fff2dc, transparent), radial-gradient(circle at 50% 60%, #ff9a2a 45%, #f27a0c 65%, #c75a0b);
   box-shadow: 0 0 2px 1px #8b8b8b;
   color: #fff4df;
   font: 18px/57px "Liberation Sans", sans-serif;
   text-align: center;
   z-index: 1;
`
const SpeedPanel = styled.div`
   display: grid;
   grid-template-columns: 8px 44px 21px;
   grid-template-rows: 19px 19px;
   column-gap: 4px;
   align-items: center;
   width: 127px;
   margin-left: -30px;
   padding: 5px 0 5px 33px;
   border: 1px solid #b5b5b5;
   border-radius: 0 25px 25px 0;
   background: linear-gradient(#fdfdfd, #dcdcdc);
   box-shadow: 0 1px 4px rgba(0, 0, 0, .4);
   color: #111;
   font: 11px/19px "Noto Sans", sans-serif;
   text-align: right;
`
const PlusButton = styled.button`
   grid-column: 3;
   grid-row: 1 / 3;
   margin-left: 3px;
`
const ImeBar = styled.div`
   position: absolute;
   left: 897px;
   bottom: 0;
   display: flex;
   align-items: center;
   gap: 7px;
   width: 163px;
   height: 23px;
   padding: 0 5px 0 0;
   border: 1px solid #b9c3d3;
   border-bottom: 0;
   background: linear-gradient(#fff, #eaf0f8);
   color: #3d4866;
   z-index: 4;
   font-size: 15px;
   font-weight: bold;
   clip-path: inset(0 0 0 26px);
`
const Leaf = styled.svg`
   position: absolute;
   left: 900px;
   bottom: 2px;
   z-index: 4;
`
const Watermark = styled.div`
   position: absolute;
   right: 76px;
   bottom: 30px;
   display: flex;
   flex-direction: column;
   align-items: flex-end;
   color: rgba(255, 255, 255, .76);
   -webkit-text-stroke: 1px rgba(175, 175, 175, .3);
   z-index: 1;
   pointer-events: none;
`
const Brand = styled.div`
   display: flex;
   align-items: flex-end;
   height: 84px;
   padding-right: 4px;
   font: bold 58px/58px "Liberation Sans", sans-serif;

   b{
      margin-bottom: -6px;
   }
   strong{
      font: 900 43px/54px "Noto Sans CJK SC", sans-serif;
      margin-left: 3px;
      -webkit-text-stroke: 0;
   }
`
const Site = styled.span`
   font: 30px/42px "Noto Sans", sans-serif;
`

const tabs = ['开始', '插入', '页面布局', '引用', '邮件', '审阅', '视图', '开发工具']
const styles = [
   { name: '↲ 正文', text: 'AaBbCcDd', on: true },
   { name: '↲ 无间隔', text: 'AaBbCcDd' },
   { name: '标题 1', text: 'AaBb', size: 26, bold: true },
   { name: '标题 2', text: 'AaBbC', size: 21, bold: true, serif: true },
   { name: '标题', text: 'AaBbC', size: 21, bold: true, serif: true },
   { name: '副标题', text: 'AaBbC', size: 21, bold: true, serif: true },
   { name: '不明显强调', text: 'AaBbCcDd', italic: true, color: '#8a8a8a' },
   { name: '强调', text: 'AaBbCcDd', italic: true },
]
const hMarks = Array.from({ length: 29 }, (_, i) => i * 2 - 8)
const vMarks = Array.from({ length: 23 }, (_, i) => Math.abs(i - 4))

const TitleArea = () => (
   <TitleBar>
      <QuickAccess>
         <Pill>
            <button aria-label="保存"><Save /></button>
            <button aria-label="撤消"><Undo /><Drop /></button>
            <button aria-label="恢复"><Undo flip /></button>
            <button aria-label="打印预览"><Preview /></button>
            <button aria-label="信息检索"><Research /></button>
            <Ball />
         </Pill>
         <button aria-label="自定义快速访问工具栏">
            <svg width="6" height="6" viewBox="0 0 6 6"><path d="M0 .5h6" stroke="#244a85" /><path d="M0 2.500h6L3 6z" fill="#244a85" /></svg>
         </button>
      </QuickAccess>
      <Title>文档 1 - Microsoft Word</Title>
      <WindowButtons>
         <WindowButton $first aria-label="最小化">
            <svg width="13" height="6" viewBox="0 0 13 6"><path d="M1 1h11v4H1z" fill="#fff" stroke="#4b5c72" /></svg>
         </WindowButton>
         <WindowButton aria-label="还原">
            <svg width="13" height="13" viewBox="0 0 13 13" fill="#fff" stroke="#4b5c72">
               <path d="M4.500.500h8v8h-8z" /><path d="M1.500 3.500h8v8h-8z" /><path d="M4 6h3v3H4z" fill="#a1bbd6" />
            </svg>
         </WindowButton>
         <WindowButton $close aria-label="关闭">
            <svg width="13" height="12" viewBox="0 0 13 12">
               <path d="M2 1.500l9 9M11 1.500l-9 9" stroke="#6a3a3a" strokeWidth="4" /><path d="M2.500 2l8 8M10.500 2l-8 8" stroke="#fff" strokeWidth="2.600" />
            </svg>
         </WindowButton>
      </WindowButtons>
   </TitleBar>
)

const Tabs = () => (
   <TabRow>
      <WordMenu aria-label="文档"><WordIcon /></WordMenu>
      {tabs.map((t, i) => <Tab key={t} href="#" $active={i === 0}>{t}</Tab>)}
      <TabTools>
         <button aria-label="帮助"><Help /></button>
         <button aria-label="最小化文档"><svg width="8" height="8" viewBox="0 0 8 8"><path d="M1 7h7" stroke="#667" strokeWidth="2" /></svg></button>
         <button aria-label="还原文档">
            <svg width="10" height="8" viewBox="0 0 10 8" fill="none" stroke="#667"><path d="M2 1h7.500v4.500M.5 3h7v4h-7z" strokeWidth="1.300" /></svg>
         </button>
         <button aria-label="关闭文档"><svg width="9" height="9" viewBox="0 0 9 9"><path d="M1 1l7 7M8 1L1 8" stroke="#667" strokeWidth="2" /></svg></button>
      </TabTools>
   </TabRow>
)

const Clipboard = () => (
   <Group label="剪贴板" w={111} pad="3px 0 0 0">
      <BigButton $w={46}><Paste /><span>粘贴</span><Drop /></BigButton>
      <SmallList>
         <SmallButton $off><Cut />剪切</SmallButton>
         <SmallButton $off><Copy />复制</SmallButton>
         <SmallButton><Brush />格式刷</SmallButton>
      </SmallList>
   </Group>
)

const FontGroup = () => (
   <Group label="字体" w={316} rows pad="10px 3px 0" gap={9}>
      <Row>
         <Combo $w={125}>
            <select aria-label="字体"><option>宋体 (中文正文)</option></select><Drop />
         </Combo>
         <Combo $w={54} $last>
            <select aria-label="字号"><option>初号</option></select><Drop />
         </Combo>
         <Cluster $space={1}>
            <Tool $w={22} $tight aria-label="增大字体"><Glyph $size={17}>A</Glyph><SizeMark /></Tool>
            <Tool $w={20} $tight aria-label="缩小字体"><Glyph $size={13}>A</Glyph><SizeMark down /></Tool>
         </Cluster>
         <Cluster><Tool $w={22} aria-label="清除格式"><Eraser /></Tool></Cluster>
         <Cluster><Tool $w={22} aria-label="拼音指南"><Phonetic>wén<b>文</b></Phonetic></Tool></Cluster>
         <Cluster><Tool $w={22} aria-label="字符边框"><Shade $frame>A</Shade></Tool></Cluster>
      </Row>
      <Row>
         <Cluster $space={2}>
            <Tool $w={22}><Glyph>B</Glyph></Tool>
            <Tool $w={24}><Glyph $italic>I</Glyph></Tool>
            <Tool $w={35}><Glyph $line="underline">U</Glyph><i /><Drop /></Tool>
            <Tool $w={25}><Glyph $size={13} $line="line-through">abc</Glyph></Tool>
            <Tool $w={23}><Glyph>x<sub>2</sub></Glyph></Tool>
            <Tool $w={24}><Glyph>x<sup>2</sup></Glyph></Tool>
            <Tool $w={28} $tight><Glyph $size={14}>Aa</Glyph><Drop /></Tool>
         </Cluster>
         <Cluster>
            <Tool $w={34} aria-label="突出显示"><Highlighter /><Drop /></Tool>
            <Tool $w={30} aria-label="字体颜色"><FontColor $size={16}>A</FontColor><Drop /></Tool>
         </Cluster>
         <Cluster><Tool $w={22} aria-label="字符底纹"><Shade>A</Shade></Tool></Cluster>
         <Cluster><Tool $w={22} aria-label="带圈字符"><Circled>字</Circled></Tool></Cluster>
      </Row>
   </Group>
)

const ParagraphGroup = () => (
   <Group label="段落" w={244} rows pad="11px 3px 0" gap={10}>
      <Row>
         <Cluster>
            <Tool $w={34} aria-label="项目符号"><Bullets /><Drop /></Tool>
            <Tool $w={35} aria-label="编号"><Numbering /><Drop /></Tool>
            <Tool $w={28} $tight aria-label="多级列表"><MultiLevel /><Drop /></Tool>
         </Cluster>
         <Cluster>
            <Tool $w={22} aria-label="减少缩进"><Indent /></Tool>
            <Tool $w={21} aria-label="增加缩进"><Indent right /></Tool>
         </Cluster>
         <Cluster><Tool $w={30} aria-label="中文版式"><ChineseLayout /><Drop /></Tool></Cluster>
         <Cluster><Tool $w={22} aria-label="排序"><Sort /></Tool></Cluster>
         <Cluster><Tool $w={22} aria-label="显示编辑标记"><Marks /></Tool></Cluster>
      </Row>
      <Row>
         <Cluster>
            <Tool $w={22} aria-label="左对齐"><Align kind="left" /></Tool>
            <Tool $w={24} aria-label="居中"><Align kind="center" /></Tool>
            <Tool $w={24} aria-label="右对齐"><Align kind="right" /></Tool>
            <Tool $w={24} $on aria-label="两端对齐"><Align kind="justify" /></Tool>
            <Tool $w={22} aria-label="分散对齐"><Distribute /></Tool>
         </Cluster>
         <Cluster><Tool $w={30} aria-label="行距"><Spacing /><Drop /></Tool></Cluster>
         <Cluster>
            <Tool $w={33} aria-label="底纹"><Bucket /><Drop /></Tool>
            <Tool $w={32} aria-label="边框"><Borders /><Drop /></Tool>
         </Cluster>
      </Row>
   </Group>
)

const StylesGroup = () => (
   <Group label="样式" w={658} grow pad="4px 4px 0">
      <Gallery>
         {styles.map(s => (
            <StyleCard key={s.name} $on={s.on}>
               <span>
                  <Sample $size={s.size} $bold={s.bold} $serif={s.serif} $italic={s.italic} $color={s.color}>{s.text}</Sample>
                  <StyleName>{s.name}</StyleName>
               </span>
            </StyleCard>
         ))}
         <GalleryScroll>
            <button aria-label="上一行"><svg width="5" height="3" viewBox="0 0 5 3"><path d="M0 3h5L2.500 0z" fill="#999" /></svg></button>
            <button aria-label="下一行"><Drop /></button>
            <button aria-label="其他"><svg width="6" height="1" viewBox="0 0 6 1"><path d="M0 0h6v1H0z" fill="#5b83b8" /></svg><Drop /></button>
         </GalleryScroll>
      </Gallery>
      <BigButton $w={58} $gap={7}><ChangeStyles /><span>更改样式</span><Drop /></BigButton>
   </Group>
)

const EditGroup = () => (
   <Group label="编辑" w={68} pad="3px 0 0 5px" launcher={false}>
      <SmallList>
         <SmallButton><Binoculars />查找<Drop /></SmallButton>
         <SmallButton><Replace />替换</SmallButton>
         <SmallButton><Cursor />选择<Drop /></SmallButton>
      </SmallList>
   </Group>
)

const Workspace = () => (
   <Body>
      <LeftRail>
         <TabStop aria-label="制表符"><span /></TabStop>
         <VRuler>
            {vMarks.map((n, i) => <div key={i}><span>{n || ''}</span></div>)}
         </VRuler>
      </LeftRail>
      <Center>
         <RulerBar>
            <HRuler>
               <Scale>
                  {hMarks.map(n => <Mark key={n} $stop={n > 0 && n < 40}>{Math.abs(n) || ''}</Mark>)}
               </Scale>
               <IndentMark $x={151} width="9" height="21" viewBox="0 0 9 21">
                  <path d="M.5.500h8v3l-4 4-4-4zM.5 14.500v-3l4-4 4 4v3zM.5 14.500h8v5h-8z" fill="#e5eefb" stroke="#55719f" />
               </IndentMark>
               <IndentMark $x={872} width="9" height="21" viewBox="0 0 9 21">
                  <path d="M.5 14.500v-3l4-4 4 4v3z" fill="#e5eefb" stroke="#55719f" />
               </IndentMark>
            </HRuler>
         </RulerBar>
         <Desk>
            <Swoosh width="320" height="120" viewBox="0 0 320 120">
               <path d="M0 0h310C200 25 90 55 0 95z" fill="#fff" fillOpacity=".22" />
               <path d="M0 95C90 55 200 25 310 0h-30C180 30 90 60 0 117z" fill="#fff" fillOpacity=".06" />
               <path d="M0 117C60 80 120 55 200 31" fill="none" stroke="#fff" strokeOpacity=".2" strokeWidth="1.500" />
            </Swoosh>
            <Paper>
               <Corners><i /><i /></Corners>
               <Text contentEditable suppressContentEditableWarning spellCheck={false}>画画</Text>
            </Paper>
         </Desk>
      </Center>
      <ScrollRail>
         <Split />
         <button aria-label="标尺">
            <svg width="15" height="16" viewBox="0 0 15 16">
               <path d="M.5.500h14v15H.5z" fill="#c3cad8" stroke="#8e98ab" />
               <path d="M3 4h4v2h6v7H7v-2H3z" fill="#fff" stroke="#3c4660" /><path d="M4 7h2M8 9h3" stroke="#3c4660" />
            </svg>
         </button>
         <Track>
            <button aria-label="向上"><svg width="9" height="5" viewBox="0 0 9 5"><path d="M0 5h9L4.500 0z" fill="#3f5279" /></svg></button>
            <Thumb><svg width="8" height="7" viewBox="0 0 8 7"><path d="M0 .5h8M0 2.500h8M0 4.500h8M0 6.500h8" stroke="#5b6c88" /></svg></Thumb>
            <Spacer />
            <button aria-label="向下"><svg width="9" height="5" viewBox="0 0 9 5"><path d="M0 0h9L4.500 5z" fill="#3f5279" /></svg></button>
         </Track>
         <button aria-label="前一页"><svg width="6" height="7" viewBox="0 0 6 7"><path d="M3 0l3 3H0zM3 3l3 3H0zM0 6h6v1H0z" /></svg></button>
         <button aria-label="选择浏览对象"><svg width="7" height="7" viewBox="0 0 7 7"><circle cx="3.500" cy="3.500" r="3" fill="#ccc" stroke="#222" /></svg></button>
         <button aria-label="下一页"><svg width="6" height="7" viewBox="0 0 6 7"><path d="M3 7l3-3H0zM3 4l3-3H0zM0 0h6v1H0z" /></svg></button>
      </ScrollRail>
   </Body>
)

const Status = () => (
   <StatusBar>
      <StatusItem>页面: 1/1</StatusItem>
      <StatusItem>字数: 2</StatusItem>
      <Plain aria-label="校对"><Proof /></Plain>
      <StatusItem>中文(简体，中国)</StatusItem>
      <Plain>插入</Plain>
      <StatusItem aria-label="宏"><Macro /></StatusItem>
      <RightStatus>
         <Views>
            {Object.keys(viewIcons).map(k => (
               <ViewButton key={k} $on={k === 'print'} aria-label={k}>
                  <svg width="12" height="12" viewBox="0 0 12 12">{viewIcons[k]}</svg>
               </ViewButton>
            ))}
         </Views>
         <Percent>130%</Percent>
         <RoundButton />
         <ZoomSlider type="range" min="0" max="100" defaultValue="53" aria-label="显示比例" />
         <RoundButton plus />
      </RightStatus>
   </StatusBar>
)

const Speed = () => (
   <SpeedWidget>
      <SpeedBall>86%</SpeedBall>
      <SpeedPanel>
         <svg width="8" height="9" viewBox="0 0 8 9"><path d="M4 0l4 4H5v5H3V4H0z" fill="#f0553d" /></svg>
         <span>0.1K/s</span>
         <PlusButton aria-label="加速">
            <svg width="20" height="20" viewBox="0 0 20 20"><circle cx="10" cy="10" r="10" fill="#2f7de0" /><path d="M5 10h10M10 5v10" stroke="#fff" strokeWidth="1.600" /></svg>
         </PlusButton>
         <svg width="8" height="9" viewBox="0 0 8 9"><path d="M4 9l4-4H5V0H3v5H0z" fill="#25a35a" /></svg>
         <span>105K/s</span>
      </SpeedPanel>
   </SpeedWidget>
)

const ImeIcons = styled.div`
   display: flex;
   align-items: center;
   gap: 7px;
   margin-left: 32px;
`
const Ime = () => (
   <ImeBar>
      <ImeIcons>
         <span>五</span>
         <svg width="15" height="14" viewBox="0 0 15 14"><path d="M10 0c6 5 3 13-3 13-3 0-5-1-7-4 7 2 11-2 10-9z" fill="#3d4866" /></svg>
         <svg width="13" height="14" viewBox="0 0 13 14"><circle cx="3" cy="4" r="2" fill="none" stroke="#3d4866" strokeWidth="1.500" /><path d="M8 7c3-1 4 0 4 2s-1 3-4 4c1-1 2-2 1.500-3C8 10 7 8 8 7z" fill="#3d4866" /></svg>
         <svg width="16" height="12" viewBox="0 0 16 12" fill="none" stroke="#3d4866"><path d="M.8.800h14.400v10.400H.8z" strokeWidth="1.600" /><path d="M3 3.500h10M3 6h10" strokeDasharray="2 1" strokeWidth="1.500" /><path d="M4 8.800h8" strokeWidth="1.500" /></svg>
         <svg width="14" height="15" viewBox="0 0 14 15" fill="#3d4866"><circle cx="7" cy="3.500" r="3.500" /><path d="M1 9c1-3 11-3 12 0l-1 2h-1c0 3-1 4-4 4s-4-1-4-4H2z" /></svg>
         <svg width="14" height="14" viewBox="0 0 14 14" fill="#3d4866"><circle cx="3.500" cy="3.500" r="3" /><circle cx="10.500" cy="3.500" r="2.300" fill="none" stroke="#3d4866" strokeWidth="1.500" /><circle cx="3.500" cy="10.500" r="3" /><circle cx="10.500" cy="10.500" r="3" /><path d="M5 5h4v4H5z" /></svg>
      </ImeIcons>
   </ImeBar>
)

const Baidu = () => (
   <Watermark>
      <Brand>
         <b>Bai</b>
         <svg width="78" height="84" viewBox="0 0 78 84">
            <g fill="#fff" fillOpacity=".72" stroke="#afafaf" strokeOpacity=".45">
               <ellipse cx="15" cy="34" rx="10" ry="13" /><ellipse cx="33" cy="16" rx="10" ry="13" />
               <ellipse cx="56" cy="18" rx="10" ry="12" /><ellipse cx="70" cy="40" rx="9" ry="12" />
               <path d="M42 36c-10 0-14 8-20 16C14 60 8 66 10 74c2 9 10 11 20 9 8-2 18-2 26 0 10 2 17-2 18-9 1-9-6-14-12-21-7-9-10-17-20-17z" />
            </g>
            <text x="18" y="77" fontSize="36" fontWeight="bold" fontFamily="Liberation Sans" fill="#8fa0b8" fillOpacity=".16" stroke="#999" strokeOpacity=".3">du</text>
         </svg>
         <strong>经验</strong>
      </Brand>
      <Site>jingyan.baidu.com</Site>
   </Watermark>
)

const App = () => (
   <Window>
      <GlobalStyle />
      <OfficeButton aria-label="Office 按钮"><OfficeLogo /></OfficeButton>
      <TitleArea />
      <Tabs />
      <Ribbon>
         <Clipboard />
         <FontGroup />
         <ParagraphGroup />
         <StylesGroup />
         <EditGroup />
      </Ribbon>
      <DocTabs>
         <DocTab href="#"><WordIcon />文档 1 *</DocTab>
         <button aria-label="关闭标签"><svg width="9" height="8" viewBox="0 0 9 8"><path d="M1 0l7 8M8 0L1 8" stroke="#15428b" strokeWidth="1.800" /></svg></button>
      </DocTabs>
      <Workspace />
      <Status />
      <Baidu />
      <Ime />
      <Leaf width="24" height="14" viewBox="0 0 24 14"><path d="M0 13c10 0 18-4 22-13 4 8 2 13-3 13z" fill="#2ba31c" /></Leaf>
      <Speed />
      <RedBox $x={103} $y={52} $w={247} $h={73} />
      <RedBox $x={319} $y={373} $w={287} $h={98} />
      <RedBox $x={897} $y={829} $w={170} $h={28} />
      <Arrows width="1000" height="840" viewBox="0 0 1000 840">
         <path d="M437 363L299 141M973 822L637 490" stroke="#f00" strokeWidth="3" />
         <path d="M293 131l15 12-13 8zM629 482l17 6-10 10z" fill="#f00" />
      </Arrows>
   </Window>
)

export default App
